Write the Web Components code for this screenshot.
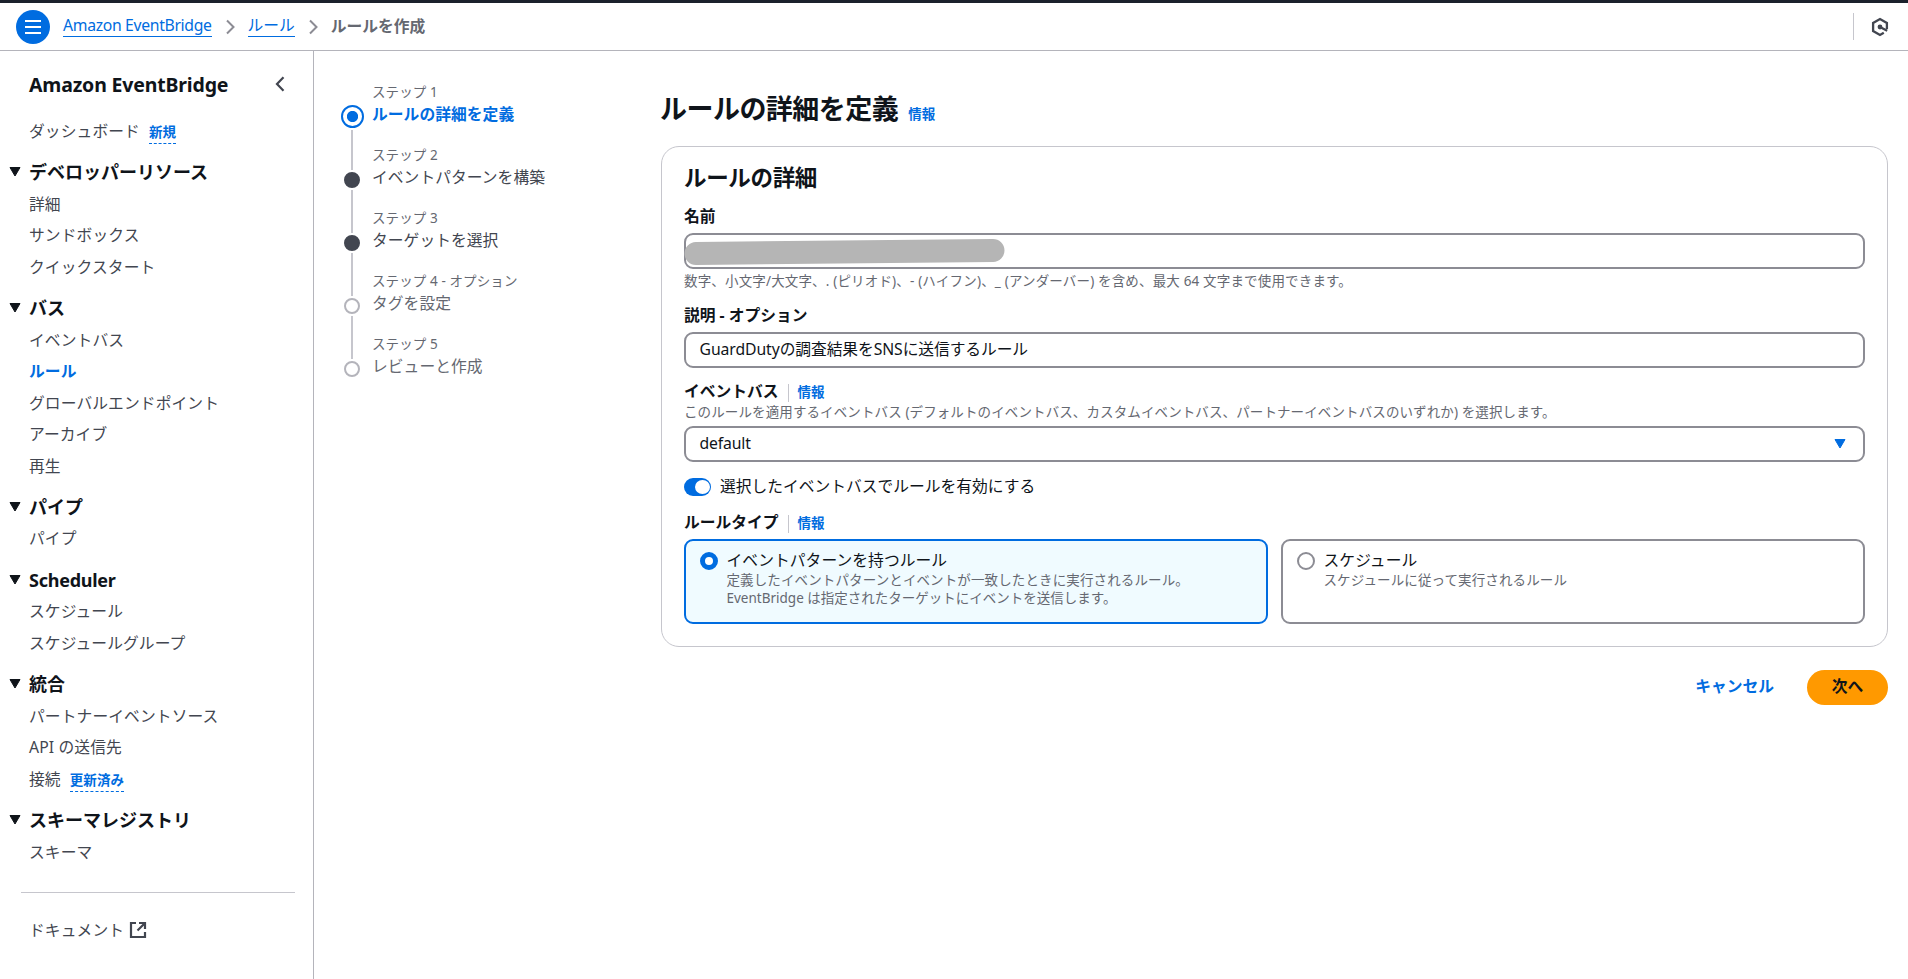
<!DOCTYPE html>
<html lang="ja">
<head>
<meta charset="utf-8">
<title>ルールを作成 | Amazon EventBridge</title>
<style>
  html {
    --blue: #006ce0;
    --text: #0f141a;
    --body: #424650;
    --muted: #656871;
    --line: #c6c6cd;
    --control: #8c8c94;
    --small: 13.5px;
  }

  body {
    margin: 0;
    height: 979px;
    overflow: hidden;
    display: flex;
    flex-direction: column;
    background: #fff;
    color: var(--text);
    font: 15.75px/22px "Noto Sans", "Noto Sans CJK JP", sans-serif;
  }

  .layout {
    flex: 1;
    display: grid;
    grid-template-columns: 314px 347px 1fr;
  }

  main {
    padding: 40px 20px 0 0;
  }

  .actions {
    display: flex;
    justify-content: flex-end;
    gap: 9px;
    margin-top: 23px;
  }
</style>
</head>
<body>
  <app-bar>
    <bread-crumb link style="--fit: -0.33px">Amazon EventBridge</bread-crumb>
    <bread-crumb link>ルール</bread-crumb>
    <bread-crumb>ルールを作成</bread-crumb>
  </app-bar>

  <div class="layout">
    <side-nav heading="Amazon EventBridge">
      <nav-item badge="新規">ダッシュボード</nav-item>
      <nav-section heading="デベロッパーリソース">
        <nav-item>詳細</nav-item>
        <nav-item>サンドボックス</nav-item>
        <nav-item>クイックスタート</nav-item>
      </nav-section>
      <nav-section heading="バス">
        <nav-item>イベントバス</nav-item>
        <nav-item active>ルール</nav-item>
        <nav-item>グローバルエンドポイント</nav-item>
        <nav-item>アーカイブ</nav-item>
        <nav-item>再生</nav-item>
      </nav-section>
      <nav-section heading="パイプ">
        <nav-item>パイプ</nav-item>
      </nav-section>
      <nav-section heading="Scheduler" style="letter-spacing: -0.25px">
        <nav-item>スケジュール</nav-item>
        <nav-item>スケジュールグループ</nav-item>
      </nav-section>
      <nav-section heading="統合">
        <nav-item>パートナーイベントソース</nav-item>
        <nav-item>API の送信先</nav-item>
        <nav-item badge="更新済み">接続</nav-item>
      </nav-section>
      <nav-section heading="スキーマレジストリ">
        <nav-item>スキーマ</nav-item>
      </nav-section>
      <nav-item slot="footer" external>ドキュメント</nav-item>
    </side-nav>

    <step-list>
      <step-item label="ステップ 1" state="current">ルールの詳細を定義</step-item>
      <step-item label="ステップ 2" state="ready">イベントパターンを構築</step-item>
      <step-item label="ステップ 3" state="ready">ターゲットを選択</step-item>
      <step-item label="ステップ 4 - オプション" state="todo">タグを設定</step-item>
      <step-item label="ステップ 5" state="todo">レビューと作成</step-item>
    </step-list>

    <main>
      <page-heading info="情報">ルールの詳細を定義</page-heading>
      <form-card heading="ルールの詳細">
        <form-field label="名前" style="--fit: 0.16px" hint="数字、小文字/大文字、. (ピリオド)、- (ハイフン)、_ (アンダーバー) を含め、最大 64 文字まで使用できます。">
          <text-box masked></text-box>
        </form-field>
        <form-field label="説明 - オプション" style="margin-top: 13px">
          <text-box style="letter-spacing: -0.08px">GuardDutyの調査結果をSNSに送信するルール</text-box>
        </form-field>
        <form-field label="イベントバス" info="情報" style="margin-top: 11px; --fit: 0.11px" description="このルールを適用するイベントバス (デフォルトのイベントバス、カスタムイベントバス、パートナーイベントバスのいずれか) を選択します。">
          <text-box select style="letter-spacing: -0.15px">default</text-box>
        </form-field>
        <toggle-switch>選択したイベントバスでルールを有効にする</toggle-switch>
        <form-field label="ルールタイプ" info="情報" style="margin-top: 13px">
          <radio-tile checked heading="イベントパターンを持つルール">定義したイベントパターンとイベントが一致したときに実行されるルール。<br><span style="letter-spacing: 0">EventBridge は指定されたターゲットにイベントを送信します。</span></radio-tile>
          <radio-tile heading="スケジュール">スケジュールに従って実行されるルール</radio-tile>
        </form-field>
      </form-card>
      <div class="actions">
        <action-button>キャンセル</action-button>
        <action-button primary>次へ</action-button>
      </div>
    </main>
  </div>

<script>
class BaseElement extends HTMLElement {
  constructor() {
    super();

    this.shadow = this.attachShadow({ mode: "open" });
  }

  // Attribute value, or an empty string
  attr(name) {
    return this.getAttribute(name) || "";
  }

  render() {
    const tmpl = document.createElement("template");

    tmpl.innerHTML = `<style>${this.styles()}</style>${this.template()}`;
    this.shadow.replaceChildren(tmpl.content.cloneNode(true));
  }

  connectedCallback() {
    this.render();
  }
}

class AppBar extends BaseElement {
  template() {
    return `
<span class="menu">
  <svg width="34" height="34" viewBox="0 0 34 34" fill="none" stroke="#fff" stroke-width="2">
    <path d="M9 11h16M9 17h16M9 23h16"/>
  </svg>
</span>
<nav><slot></slot></nav>
<span class="tool">
  <svg width="18" height="20" viewBox="0 0 18 20" fill="none" stroke="#424650" stroke-width="2.3">
    <path d="M15.900 12V6L9 2 2.100 6v8L9 18l3.800-2.200"/>
    <path d="M9 10l7.200 3.800"/>
    <circle cx="9" cy="10" r="2.400" fill="#424650" stroke="none"/>
  </svg>
</span>
`;
  }

  styles() {
    return `
  :host {
    box-sizing: border-box;
    display: flex;
    flex: none;
    align-items: center;
    height: 51px;
    padding: 0 19px 0 16px;
    border-top: 3px solid #1b212c;
    border-bottom: 1px solid #b4b4bb;
  }

  .menu {
    width: 34px;
    height: 34px;
    margin-right: 13px;
    border-radius: 50%;
    background: var(--blue);
  }

  nav {
    display: flex;
    flex: 1;
  }

  .tool {
    display: flex;
    align-items: center;
    height: 27px;
    padding-left: 17px;
    border-left: 1px solid var(--line);
  }
`;
  }
}

class BreadCrumb extends BaseElement {
  template() {
    return `
<span class="text"><slot></slot></span>
<svg width="9" height="16" viewBox="0 0 9 16" fill="none" stroke="#8c8c94" stroke-width="2">
  <path d="M1 1.5L7.5 8 1 14.5"/>
</svg>
`;
  }

  styles() {
    return `
  :host {
    display: flex;
    align-items: center;
    color: var(--muted);
    font-weight: 700;
    letter-spacing: var(--fit, 0);
  }

  :host([link]) {
    color: var(--blue);
    font-weight: 400;
  }

  .text {
    height: 20px;
    line-height: 18px;
  }

  :host([link]) .text {
    border-bottom: 1px solid;
  }

  svg {
    margin: 0 13px 0 14px;
  }

  :host(:last-child) svg {
    display: none;
  }
`;
  }
}

class SideNav extends BaseElement {
  template() {
    return `
<header>
  <h2>${this.attr("heading")}</h2>
  <svg width="10" height="16" viewBox="0 0 10 16" fill="none" stroke="#424650" stroke-width="2.2">
    <path d="M8.5 1.3L2 8l6.5 6.7"/>
  </svg>
</header>
<slot></slot>
<hr>
<slot name="footer"></slot>
`;
  }

  styles() {
    return `
  :host {
    display: block;
    border-right: 1px solid #b4b4bb;
  }

  header {
    display: flex;
    align-items: center;
    justify-content: space-between;
    height: 30px;
    margin: 18px 28px 16px 29px;
  }

  h2 {
    margin: 2px 0 0;
    font-size: 19.5px;
    letter-spacing: -0.17px;
  }

  hr {
    margin: 25px 18px 21px 21px;
    border: 0;
    border-top: 1px solid var(--line);
  }
`;
  }
}

class NavSection extends BaseElement {
  template() {
    return `
<h3>
  <svg width="12" height="10" viewBox="0 0 12 10"><path d="M1 .5h10L6 9z" fill="#0f141a" stroke="#0f141a" stroke-linejoin="round"/></svg>
  ${this.attr("heading")}
</h3>
<slot></slot>
`;
  }

  styles() {
    return `
  :host {
    display: block;
    margin-top: 7.9px;
  }

  h3 {
    box-sizing: border-box;
    display: flex;
    align-items: center;
    gap: 8px;
    height: 33.5px;
    margin: 0;
    padding: 2px 0 0 9px;
    font-size: 18px;
  }
`;
  }
}

class NavItem extends BaseElement {
  template() {
    const badge = this.attr("badge");

    return `
<slot></slot>
${badge ? `<span class="badge">${badge}</span>` : ""}
${
  this.hasAttribute("external")
    ? `<svg width="18" height="18" viewBox="0 0 18 18" fill="none" stroke="#424650" stroke-width="2.2">
  <path d="M7 2H2v14h14v-5M10 2h6v6M16 2L8.500 9.500"/>
</svg>`
    : ""
}
`;
  }

  styles() {
    return `
  :host {
    display: flex;
    align-items: center;
    height: 31.5px;
    padding-left: 29px;
    color: var(--body);
    letter-spacing: 0.1px;
  }

  :host([active]) {
    color: var(--blue);
    font-weight: 700;
  }

  .badge {
    margin: 3px 0 0 9px;
    border-bottom: 1px dashed;
    color: var(--blue);
    font-size: var(--small);
    font-weight: 700;
    line-height: 22px;
  }

  svg {
    margin-left: 5px;
  }
`;
  }
}

class StepList extends BaseElement {
  template() {
    return `<slot></slot>`;
  }

  styles() {
    return `
  :host {
    display: block;
    padding: 30px 0 0 26.5px;
  }
`;
  }
}

class StepItem extends BaseElement {
  template() {
    return `
<span class="rail"><i class="dot"></i><i class="line"></i></span>
<span>
  <span class="label">${this.attr("label")}</span>
  <span class="title"><slot></slot></span>
</span>
`;
  }

  styles() {
    return `
  :host {
    display: flex;
    gap: 8.5px;
    height: 63px;
    color: var(--muted);
  }

  .label {
    display: block;
    font-size: var(--small);
    line-height: 22px;
    letter-spacing: 0.1px;
  }

  .title {
    display: block;
    line-height: 23px;
    letter-spacing: 0.05px;
  }

  .rail {
    box-sizing: border-box;
    display: flex;
    flex-direction: column;
    align-items: center;
    width: 23px;
    height: 81px;
    padding-top: 28px;
  }

  .dot {
    box-sizing: border-box;
    flex: none;
    width: 16px;
    height: 16px;
    border: 2px solid #b4b4bb;
    border-radius: 50%;
  }

  .line {
    flex: 1;
    width: 2px;
    margin: 2px 0 -8px;
    background: var(--line);
  }

  :host([state="ready"]) .title {
    color: var(--body);
  }

  :host([state="ready"]) .dot {
    border-color: var(--body);
    background: var(--body);
  }

  :host([state="current"]) .rail {
    padding-top: 24px;
  }

  :host([state="current"]) .title {
    color: var(--blue);
    font-weight: 700;
  }

  :host([state="current"]) .dot {
    width: 23px;
    height: 23px;
    border-color: var(--blue);
    background: radial-gradient(circle, var(--blue) 5.2px, #fff 6px);
  }

  :host(:last-child) .line {
    display: none;
  }
`;
  }
}

class PageHeading extends BaseElement {
  template() {
    return `<h1><slot></slot></h1><span>${this.attr("info")}</span>`;
  }

  styles() {
    return `
  :host {
    display: flex;
    align-items: baseline;
    gap: 10px;
    height: 36px;
    margin: 0 0 19px -1px;
  }

  h1 {
    margin: 0;
    font-size: 27px;
    line-height: 36px;
    letter-spacing: -0.02em;
  }

  span {
    color: var(--blue);
    font-size: var(--small);
    font-weight: 700;
  }
`;
  }
}

class FormCard extends BaseElement {
  template() {
    return `<h2>${this.attr("heading")}</h2><slot></slot>`;
  }

  styles() {
    return `
  :host {
    box-sizing: border-box;
    display: block;
    height: 501px;
    padding: 17px 22px 0;
    border: 1px solid var(--line);
    border-radius: 18px;
  }

  h2 {
    margin: 0 0 12px;
    font-size: 22.5px;
    line-height: 28px;
    letter-spacing: -0.015em;
  }
`;
  }
}

class FormField extends BaseElement {
  template() {
    const info = this.attr("info");
    const description = this.attr("description");
    const hint = this.attr("hint");

    return `
<div class="head">
  <label>${this.attr("label")}</label>
  ${info ? `<span class="info"><span>${info}</span></span>` : ""}
</div>
${description ? `<div class="note">${description}</div>` : ""}
<div class="controls"><slot></slot></div>
${hint ? `<div class="note">${hint}</div>` : ""}
`;
  }

  styles() {
    return `
  :host {
    display: block;
  }

  .head {
    display: flex;
    align-items: center;
    height: 24px;
  }

  label {
    font-weight: 700;
  }

  .info {
    height: 18px;
    margin: 3px 0 0 9px;
    padding-left: 9px;
    border-left: 1px solid var(--line);
    color: var(--blue);
    font-size: var(--small);
    font-weight: 700;
    line-height: 16px;
  }

  .controls {
    display: flex;
    gap: 13px;
    margin-top: 5px;
  }

  .note {
    color: var(--muted);
    font-size: var(--small);
    line-height: 18px;
    letter-spacing: var(--fit, 0);
  }

  .controls + .note {
    margin-top: 3px;
  }
`;
  }
}

class TextBox extends BaseElement {
  template() {
    return `
<span class="value"><slot></slot></span>
${this.hasAttribute("masked") ? `<svg class="mask" width="322" height="28" viewBox="0 0 322 28"><path d="M12 16.500L309 13.500" stroke="#b5b5b5" stroke-width="23" stroke-linecap="round"/></svg>` : ""}
${this.hasAttribute("select") ? `<svg width="12" height="10" viewBox="0 0 12 10"><path d="M1 .5h10L6 9z" fill="#006ce0" stroke="#006ce0" stroke-linejoin="round"/></svg>` : ""}
`;
  }

  styles() {
    return `
  :host {
    box-sizing: border-box;
    display: flex;
    flex: 1;
    align-items: center;
    height: 36px;
    padding: 0 17px 0 13.5px;
    border: 2px solid var(--control);
    border-radius: 9px;
  }

  .value {
    flex: 1;
    margin-top: -2px;
  }

  :host([masked]) .value {
    display: none;
  }

  .mask {
    margin-left: -15.5px;
  }
`;
  }
}

class ToggleSwitch extends BaseElement {
  template() {
    return `<span class="track"><i></i></span><slot></slot>`;
  }

  styles() {
    return `
  :host {
    display: flex;
    align-items: center;
    gap: 9px;
    height: 22px;
    margin-top: 13px;
  }

  .track {
    box-sizing: border-box;
    display: flex;
    justify-content: flex-end;
    width: 27px;
    height: 18px;
    margin-top: 2px;
    padding: 2px 1px 2px 0;
    border-radius: 9px;
    background: var(--blue);
  }

  i {
    width: 15px;
    height: 14px;
    border-radius: 50%;
    background: #fff;
  }
`;
  }
}

class RadioTile extends BaseElement {
  template() {
    return `
<i></i>
<span>
  <span class="title">${this.attr("heading")}</span>
  <span class="note"><slot></slot></span>
</span>
`;
  }

  styles() {
    return `
  :host {
    box-sizing: border-box;
    display: flex;
    flex: 1;
    gap: 8.5px;
    height: 85px;
    padding: 8px 14px;
    border: 2px solid var(--control);
    border-radius: 9px;
  }

  :host([checked]) {
    border-color: var(--blue);
    background: #f0fbff;
  }

  i {
    box-sizing: border-box;
    flex: none;
    width: 18px;
    height: 18px;
    margin-top: 3px;
    border: 2px solid var(--control);
    border-radius: 50%;
    background: #fff;
  }

  :host([checked]) i {
    border: 5px solid var(--blue);
  }

  .title {
    display: block;
    line-height: 22px;
    letter-spacing: 0.07px;
  }

  .note {
    display: block;
    color: var(--muted);
    font-size: var(--small);
    line-height: 18px;
    letter-spacing: 0.12px;
  }
`;
  }
}

class ActionButton extends BaseElement {
  template() {
    return `<slot></slot>`;
  }

  styles() {
    return `
  :host {
    box-sizing: border-box;
    display: flex;
    justify-content: center;
    height: 35px;
    padding: 0 24px;
    border-radius: 18px;
    color: var(--blue);
    font-weight: 700;
    line-height: 32px;
  }

  :host([primary]) {
    width: 81px;
    background: #ff9900;
    color: var(--text);
  }
`;
  }
}

customElements.define("app-bar", AppBar);
customElements.define("bread-crumb", BreadCrumb);
customElements.define("side-nav", SideNav);
customElements.define("nav-section", NavSection);
customElements.define("nav-item", NavItem);
customElements.define("step-list", StepList);
customElements.define("step-item", StepItem);
customElements.define("page-heading", PageHeading);
customElements.define("form-card", FormCard);
customElements.define("form-field", FormField);
customElements.define("text-box", TextBox);
customElements.define("toggle-switch", ToggleSwitch);
customElements.define("radio-tile", RadioTile);
customElements.define("action-button", ActionButton);
</script>
</body>
</html>
